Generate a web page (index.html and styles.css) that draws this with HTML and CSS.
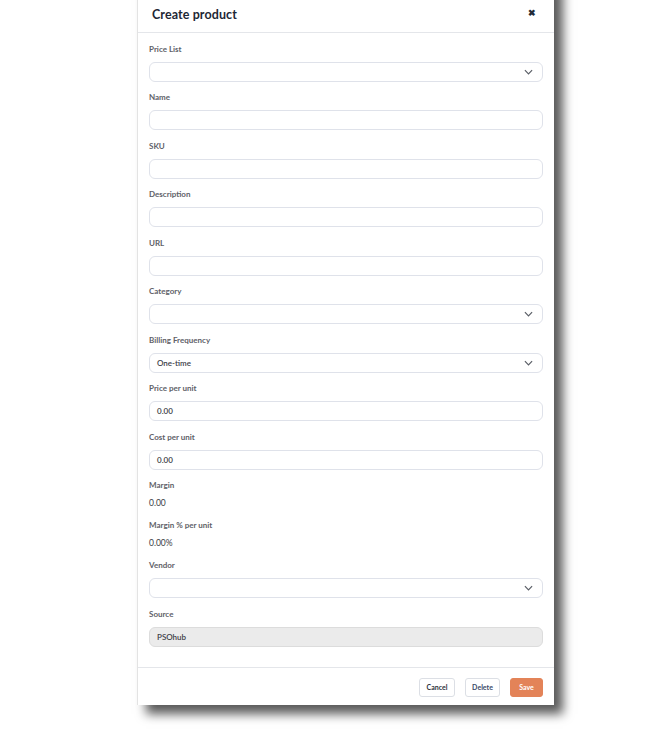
FILE: index.html
```html
<!DOCTYPE html>
<html>
<head>
<meta charset="utf-8">
<link rel="stylesheet" href="styles.css">
</head>
<body>
<div class="modal">
  <div class="modal-header">
    <h2 class="title">Create product</h2>
    <span class="close">&#10006;</span>
  </div>
  <div class="modal-body">
    <div class="field">
      <label class="label">Price List</label>
      <div class="input select"><span class="value"></span><svg class="chev" viewBox="0 0 10 6"><path d="M1 1l4 4 4-4"/></svg></div>
    </div>
    <div class="field">
      <label class="label">Name</label>
      <div class="input"></div>
    </div>
    <div class="field">
      <label class="label">SKU</label>
      <div class="input"></div>
    </div>
    <div class="field">
      <label class="label">Description</label>
      <div class="input"></div>
    </div>
    <div class="field">
      <label class="label">URL</label>
      <div class="input"></div>
    </div>
    <div class="field">
      <label class="label">Category</label>
      <div class="input select"><span class="value"></span><svg class="chev" viewBox="0 0 10 6"><path d="M1 1l4 4 4-4"/></svg></div>
    </div>
    <div class="field">
      <label class="label">Billing Frequency</label>
      <div class="input select"><span class="value">One-time</span><svg class="chev" viewBox="0 0 10 6"><path d="M1 1l4 4 4-4"/></svg></div>
    </div>
    <div class="field">
      <label class="label">Price per unit</label>
      <div class="input"><span class="value">0.00</span></div>
    </div>
    <div class="field">
      <label class="label">Cost per unit</label>
      <div class="input"><span class="value">0.00</span></div>
    </div>
    <div class="field static">
      <label class="label">Margin</label>
      <div class="static-value">0.00</div>
    </div>
    <div class="field static">
      <label class="label">Margin % per unit</label>
      <div class="static-value">0.00%</div>
    </div>
    <div class="field">
      <label class="label">Vendor</label>
      <div class="input select"><span class="value"></span><svg class="chev" viewBox="0 0 10 6"><path d="M1 1l4 4 4-4"/></svg></div>
    </div>
    <div class="field">
      <label class="label">Source</label>
      <div class="input disabled"><span class="value">PSOhub</span></div>
    </div>
  </div>
  <div class="modal-footer">
    <button class="btn btn-cancel">Cancel</button>
    <button class="btn btn-delete">Delete</button>
    <button class="btn btn-save">Save</button>
  </div>
</div>
</body>
</html>
```

FILE: styles.css
```css
* { box-sizing: border-box; }
html, body { margin: 0; padding: 0; background: #ffffff; }
body {
  font-family: Lato, "Noto Sans", sans-serif;
  color: #333;
  height: 744px;
  overflow: hidden;
}
.modal {
  margin-left: 137px;
  margin-top: -20px;
  width: 417px;
  background: #fff;
  border-left: 1px solid #e3e3e3;
  box-shadow: 9px 9px 10px rgba(0, 0, 0, 0.65);
}
.modal-header {
  height: 53px;
  padding: 20px 18px 0 14px;
  display: flex;
  align-items: center;
  justify-content: space-between;
  border-bottom: 1px solid #e4e6ea;
}
.title {
  margin: 0;
  font-size: 12.5px;
  font-weight: 700;
  color: #1d2735;
  letter-spacing: 0.1px;
  position: relative;
  top: -2px;
}
.close {
  font-size: 9px;
  font-weight: 900;
  color: #222a36;
  position: relative;
  top: -4px;
}
.modal-body {
  padding: 10.5px 11px 20px 11px;
  display: flex;
  flex-direction: column;
  gap: 10.5px;
}
.field {
  display: flex;
  flex-direction: column;
  gap: 8px;
}
.field.static { gap: 8px; margin-bottom: 1.5px; }
.label {
  font-size: 8px;
  line-height: 10px;
  font-weight: 700;
  color: #5e6168;
}
.input {
  height: 20px;
  border: 1px solid #dfe2ea;
  border-radius: 6px;
  background: #fff;
  display: flex;
  align-items: center;
  justify-content: space-between;
  padding: 0 9px 0 7px;
}
.input.disabled {
  background: #ebebeb;
  border-color: #dcdcdc;
}
.value {
  font-size: 8px;
  color: #3c4048;
  font-weight: 600;
}
.chev {
  width: 9px;
  height: 6px;
  fill: none;
  stroke: #5a5e66;
  stroke-width: 1.3;
}
.static-value {
  font-size: 8.5px;
  line-height: 10px;
  color: #3a3d44;
  font-weight: 400;
}
.modal-footer {
  border-top: 1px solid #e4e6ea;
  padding: 10px 11px 8px;
  display: flex;
  justify-content: flex-end;
  gap: 10px;
}
.btn {
  height: 19px;
  font-family: Lato, "Noto Sans", sans-serif;
  font-size: 7px;
  font-weight: 700;
  border-radius: 3px;
  padding: 0;
  cursor: pointer;
}
.btn-cancel {
  width: 36px;
  background: #fff;
  border: 1px solid #dcdfe5;
  color: #2e333b;
}
.btn-delete {
  width: 35px;
  background: #fff;
  border: 1px solid #dcdfe5;
  color: #3b4a69;
}
.btn-save {
  width: 33px;
  background: #e38358;
  border: 1px solid #e38358;
  color: #fff;
}
```
